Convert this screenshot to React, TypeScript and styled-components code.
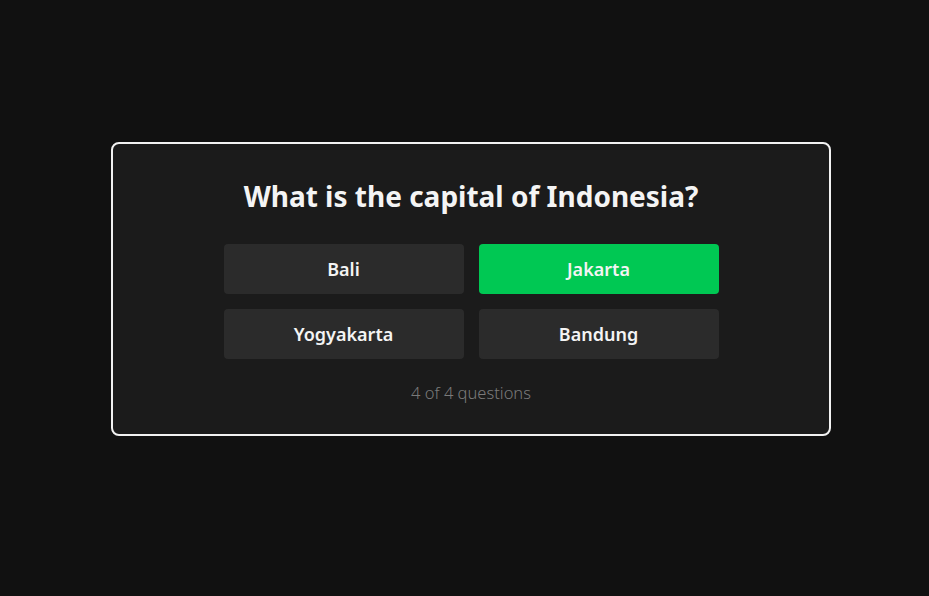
import React from 'react';
import styled, { createGlobalStyle } from 'styled-components';

const GlobalStyle = createGlobalStyle`
  html, body {
    margin: 0;
    padding: 0;
    background: #111111;
    font-family: 'Noto Sans', 'Open Sans', sans-serif;
  }
`;

interface Option {
  label: string;
  correct?: boolean;
}

const options: Option[] = [
  { label: 'Bali' },
  { label: 'Jakarta', correct: true },
  { label: 'Yogyakarta' },
  { label: 'Bandung' },
];

const Page = styled.div`
  min-height: 100vh;
  box-sizing: border-box;
  display: flex;
  align-items: center;
  justify-content: center;
  padding: 0 0 18px 13px;
`;

const Card = styled.div`
  width: 720px;
  box-sizing: border-box;
  background: #1b1b1b;
  border: 2px solid #f2f2f2;
  border-radius: 8px;
  padding: 34px 32px 30px;
  display: flex;
  flex-direction: column;
  align-items: center;
`;

const Question = styled.h1`
  margin: 0 0 30px;
  color: #f4f4f4;
  font-size: 28px;
  line-height: 36px;
  font-weight: 700;
  text-align: center;
`;

const Grid = styled.div`
  display: grid;
  grid-template-columns: repeat(2, 240px);
  gap: 15px;
`;

const Answer = styled.button<{ $correct?: boolean }>`
  height: 50px;
  border: none;
  border-radius: 4px;
  background: ${(p) => (p.$correct ? '#00c853' : '#2b2b2b')};
  color: #f4f4f4;
  font-family: inherit;
  font-size: 18px;
  font-weight: 600;
  cursor: pointer;
`;

const Progress = styled.div`
  margin-top: 23px;
  color: #7a7a7a;
  font-size: 16.5px;
  line-height: 22px;
  font-weight: 300;
`;

export default function App() {
  return (
    <>
      <GlobalStyle />
      <Page>
        <Card>
          <Question>What is the capital of Indonesia?</Question>
          <Grid>
            {options.map((o) => (
              <Answer key={o.label} $correct={o.correct}>
                {o.label}
              </Answer>
            ))}
          </Grid>
          <Progress>4 of 4 questions</Progress>
        </Card>
      </Page>
    </>
  );
}
